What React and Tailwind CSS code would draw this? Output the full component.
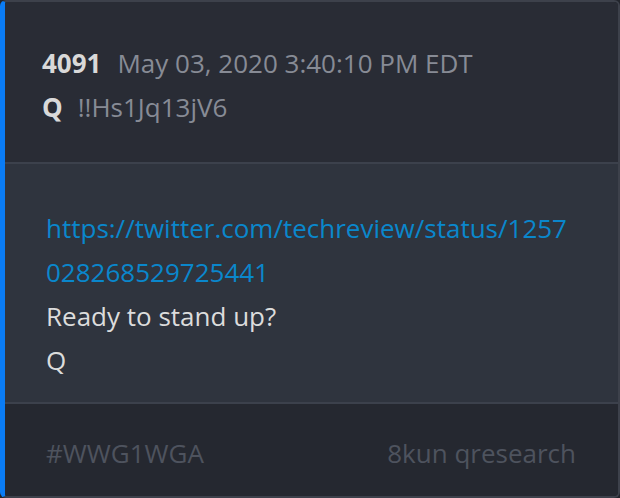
export default function App() {
  return (
    <div className="w-[620px] h-[498px] bg-[#22252c]" style={{ fontFamily: '"Open Sans", "Noto Sans", sans-serif' }}>
      <div className="flex flex-col h-full rounded-[6px] border-2 border-[#3d414b] border-l-[5px] border-l-[#0a7cf5] overflow-hidden text-[26px] leading-[44px]">
        {/* header */}
        <div className="bg-[#292c35] pl-[37px] pr-10 pt-[39px] pb-[33px] border-b-2 border-[#3c414c]">
          <div className="flex items-baseline">
            <span className="font-bold text-[#d9d9d9]">4091</span>
            <span className="ml-[16px] text-[#878b95]">May 03, 2020 3:40:10 PM EDT</span>
          </div>
          <div className="flex items-baseline">
            <span className="font-bold text-[#d9d9d9]">Q</span>
            <span className="ml-[15px] text-[#878b95]">!!Hs1Jq13jV6</span>
          </div>
        </div>
        {/* body */}
        <div className="bg-[#2f343e] pl-[41px] pr-[41px] pt-[42px] pb-[20px] border-b-2 border-[#3c414c] text-[#dcdcdc]">
          <a href="#" className="block text-[#0a87cc]">
            <span className="block">https://twitter.com/techreview/status/1257</span>
            <span className="block">028268529725441</span>
          </a>
          <p>Ready to stand up?</p>
          <p>Q</p>
        </div>
        {/* footer */}
        <div className="flex-1 bg-[#252830] pl-[41px] pr-[42px] pt-[27px] flex justify-between text-[#4e535e]">
          <span>#WWG1WGA</span>
          <span>8kun qresearch</span>
        </div>
      </div>
    </div>
  );
}
